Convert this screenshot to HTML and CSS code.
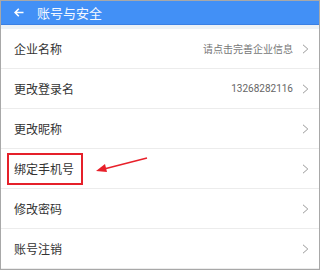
FILE: index.html
```html
<!DOCTYPE html>
<html lang="zh">
<head>
<meta charset="utf-8">
<link rel="stylesheet" href="styles.css">
</head>
<body>
<div class="frame">
  <div class="header">
    <svg class="back" width="10" height="9" viewBox="0 0 10 9"><path d="M9.5 4.5H1.2M4.8 0.8L1.1 4.5L4.8 8.2" fill="none" stroke="#fff" stroke-width="1.6"/></svg>
    <span class="title">账号与安全</span>
  </div>
  <div class="gap"></div>
  <div class="list">
    <div class="row"><span class="label">企业名称</span><span class="value">请点击完善企业信息</span><svg class="chev" width="7" height="10" viewBox="0 0 7 10"><path d="M1 0.8L5.8 5L1 9.2" fill="none" stroke="#9a9a9a" stroke-width="1"/></svg></div>
    <div class="row"><span class="label">更改登录名</span><span class="value num">13268282116</span><svg class="chev" width="7" height="10" viewBox="0 0 7 10"><path d="M1 0.8L5.8 5L1 9.2" fill="none" stroke="#9a9a9a" stroke-width="1"/></svg></div>
    <div class="row"><span class="label">更改昵称</span><span class="value"></span><svg class="chev" width="7" height="10" viewBox="0 0 7 10"><path d="M1 0.8L5.8 5L1 9.2" fill="none" stroke="#9a9a9a" stroke-width="1"/></svg></div>
    <div class="row"><span class="label">绑定手机号</span><span class="value"></span><svg class="chev" width="7" height="10" viewBox="0 0 7 10"><path d="M1 0.8L5.8 5L1 9.2" fill="none" stroke="#9a9a9a" stroke-width="1"/></svg></div>
    <div class="row"><span class="label">修改密码</span><span class="value"></span><svg class="chev" width="7" height="10" viewBox="0 0 7 10"><path d="M1 0.8L5.8 5L1 9.2" fill="none" stroke="#9a9a9a" stroke-width="1"/></svg></div>
    <div class="row"><span class="label">账号注销</span><span class="value"></span><svg class="chev" width="7" height="10" viewBox="0 0 7 10"><path d="M1 0.8L5.8 5L1 9.2" fill="none" stroke="#9a9a9a" stroke-width="1"/></svg></div>
  </div>
  <div class="highlight"></div>
  <svg class="pointer" width="52" height="16" viewBox="0 0 52 16"><line x1="51" y1="1" x2="8" y2="12" stroke="#e8202a" stroke-width="1.5"/><polygon points="0,14 9,7 11,15" fill="#e8202a"/></svg>
</div>
</body>
</html>
```
FILE: styles.css
```css
html, body {
  margin: 0;
  padding: 0;
  background: #fff;
}
.frame {
  position: relative;
  width: 320px;
  height: 270px;
  box-sizing: border-box;
  border: 1px solid #a8a8a8;
  background: #fff;
  font-family: "Noto Sans CJK SC", "Noto Sans", sans-serif;
  overflow: hidden;
}
.header {
  height: 23px;
  background: #4290f6;
  border-bottom: 1px solid #3a80e4;
  display: flex;
  align-items: center;
  padding-left: 13px;
  color: #fff;
}
.back {
  display: block;
  margin-top: -1px;
}
.title {
  margin-left: 13px;
  font-size: 13px;
  line-height: 23px;
  color: #f4f8ff;
}
.gap {
  height: 4px;
  background: #edf2f6;
}
.row {
  height: 39px;
  border-bottom: 1px solid #ececec;
  display: flex;
  align-items: center;
  padding: 0 10px 0 13px;
}
.label {
  font-size: 12px;
  color: #333;
  flex: 1;
}
.value {
  font-size: 10px;
  color: #777;
  margin-right: 9px;
}
.value.num {
  font-family: Roboto, "Noto Sans", sans-serif;
  font-size: 10px;
  color: #666;
}
.chev {
  display: block;
}
.highlight {
  position: absolute;
  left: 6px;
  top: 152px;
  width: 76px;
  height: 32px;
  box-sizing: border-box;
  border: 2px solid #e5202a;
}
.pointer {
  position: absolute;
  left: 95px;
  top: 156px;
}
```
